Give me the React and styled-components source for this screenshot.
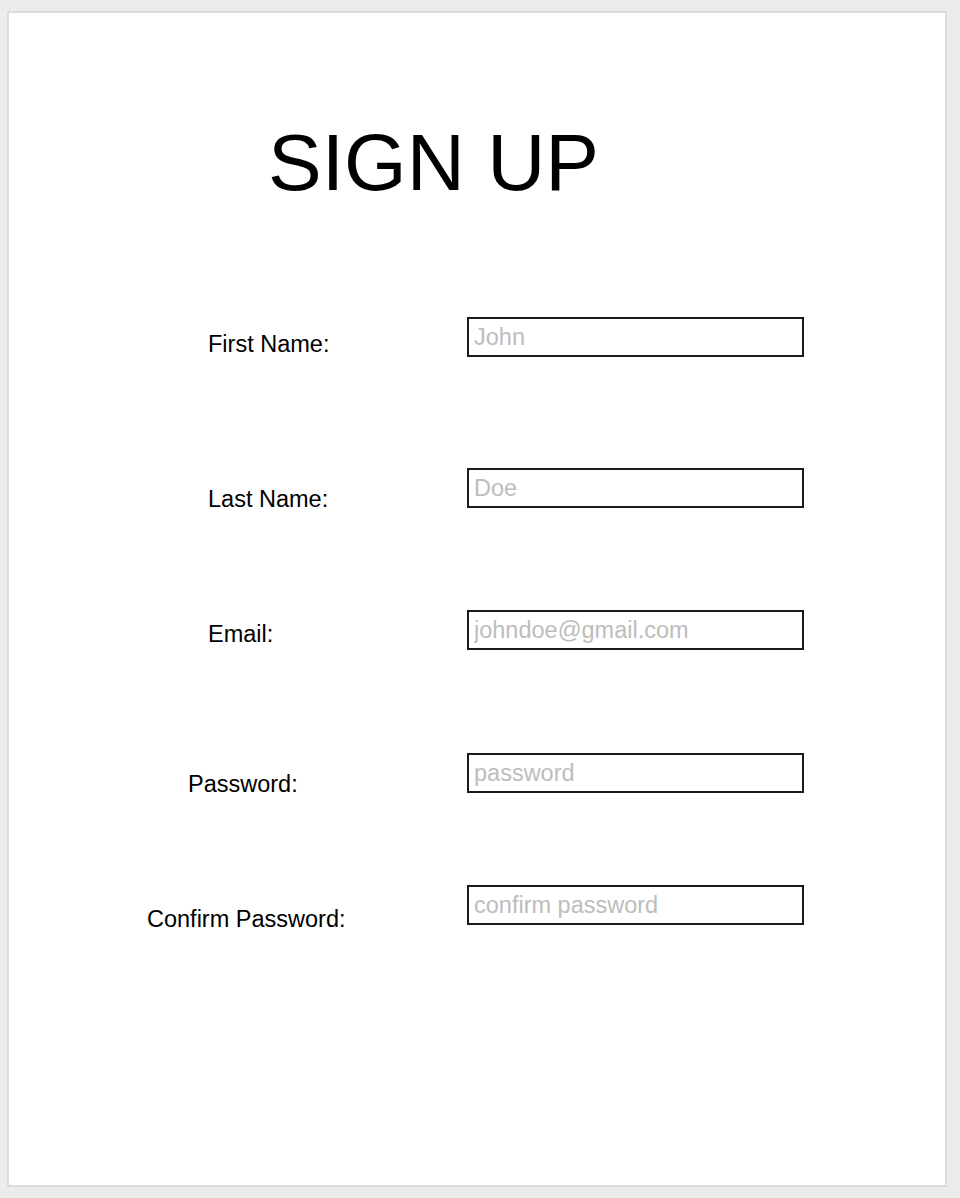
import React from "react"
import styled, { createGlobalStyle } from "styled-components"

const GlobalStyle = createGlobalStyle`
  html, body {
    margin: 0;
    padding: 0;
    background: #ececec;
  }
  body {
    font-family: "Liberation Sans", Arial, Helvetica, sans-serif;
    color: #000;
  }
`

const Page = styled.div`
  padding: 11px 13px 11px 7px;
  box-sizing: border-box;
`

const Card = styled.div`
  width: 940px;
  height: 1176px;
  box-sizing: border-box;
  background: #fff;
  border: 2px solid #dcdcdc;
`

const Title = styled.h1`
  margin: 109px 0 0 0;
  padding-left: 259px;
  font-size: 80.5px;
  font-weight: 400;
  line-height: 80px;
`

const Form = styled.form`
  display: flex;
  flex-direction: column;
  margin-top: 115px;
`

const Row = styled.div`
  display: flex;
  align-items: flex-start;
  height: 40px;
  margin-top: ${({ gap }) => gap}px;
`

const Label = styled.label`
  width: 458px;
  box-sizing: border-box;
  padding-left: ${({ indent }) => indent}px;
  padding-top: ${({ drop }) => drop}px;
  font-size: 23.5px;
  white-space: nowrap;
`

const Input = styled.input`
  width: 337px;
  height: 40px;
  box-sizing: border-box;
  border: 2px solid #1a1a1a;
  border-radius: 0;
  padding: 0 5px;
  margin: 0;
  font-family: "Liberation Sans", Arial, Helvetica, sans-serif;
  font-size: 23.5px;
  outline: none;
  &::placeholder {
    color: #bdbdbd;
  }
`

const fields = [
  { id: "first", label: "First Name:", placeholder: "John", indent: 199, drop: 14, gap: 0 },
  { id: "last", label: "Last Name:", placeholder: "Doe", indent: 199, drop: 18, gap: 111 },
  { id: "email", label: "Email:", placeholder: "johndoe@gmail.com", indent: 199, drop: 11, gap: 102 },
  { id: "password", label: "Password:", placeholder: "password", indent: 179, drop: 18, gap: 103, type: "password" },
  { id: "confirm", label: "Confirm Password:", placeholder: "confirm password", indent: 138, drop: 21, gap: 92, type: "password" },
]

export default function App() {
  return (
    <Page>
      <GlobalStyle />
      <Card>
        <Title>SIGN UP</Title>
        <Form onSubmit={(e) => e.preventDefault()}>
          {fields.map((f) => (
            <Row key={f.id} gap={f.gap}>
              <Label htmlFor={f.id} indent={f.indent} drop={f.drop}>
                {f.label}
              </Label>
              <Input id={f.id} type={f.type || "text"} placeholder={f.placeholder} />
            </Row>
          ))}
        </Form>
      </Card>
    </Page>
  )
}
